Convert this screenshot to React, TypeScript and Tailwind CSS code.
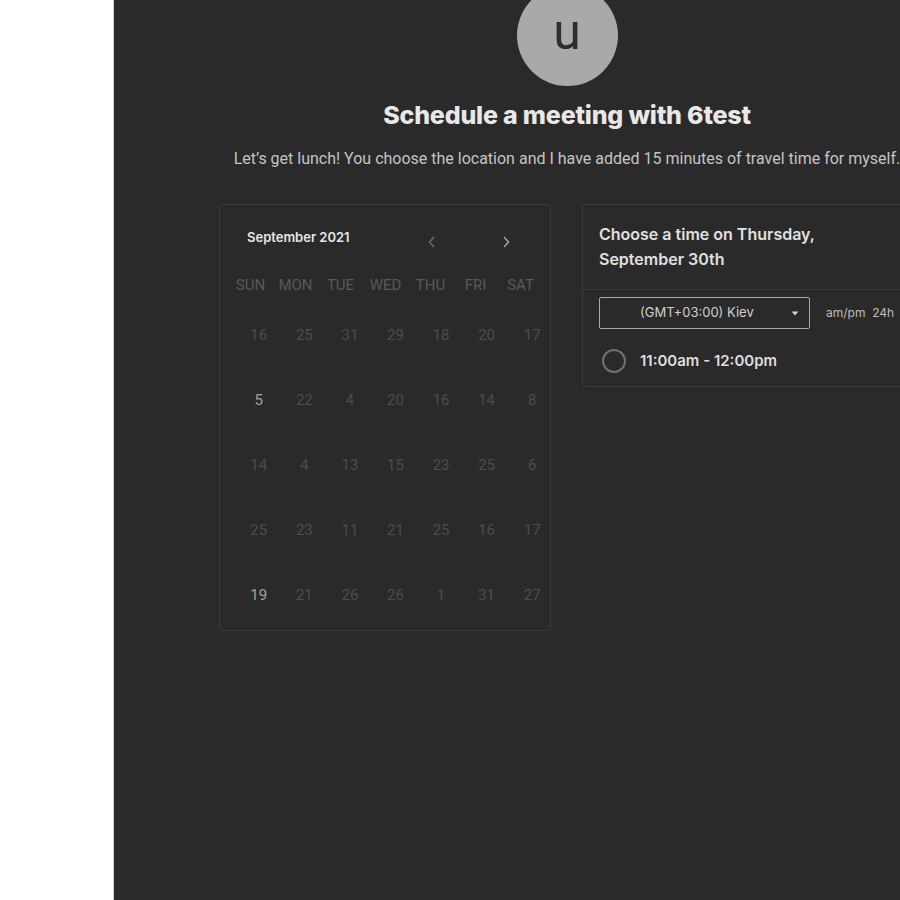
import React from "react";

const weekdays = ["SUN", "MON", "TUE", "WED", "THU", "FRI", "SAT"];
const rows = [
  ["16", "25", "31", "29", "18", "20", "17"],
  ["5", "22", "4", "20", "16", "14", "8"],
  ["14", "4", "13", "15", "23", "25", "6"],
  ["25", "23", "11", "21", "25", "16", "17"],
  ["19", "21", "26", "26", "1", "31", "27"],
];

export default function App() {
  return (
    <div className="flex h-[900px] w-[900px] overflow-hidden bg-white" style={{ fontFamily: "Inter, 'Noto Sans', sans-serif" }}>
      <div className="w-[113px] shrink-0 bg-white" />
      <div className="flex-1 overflow-hidden bg-[#2a2a2a] border-l border-[#cfcfcf]">
        <div className="w-[906px] shrink-0 flex flex-col items-center">
          <div className="-mt-[15px] flex h-[101px] w-[101px] items-center justify-center rounded-full bg-[#a9a9a9]">
            <span className="text-[50px] leading-none text-[#2e2e2e] -mt-[8px]" style={{ fontFamily: "Roboto, sans-serif" }}>u</span>
          </div>
          <h1 className="mt-[14px] text-[25px] font-extrabold leading-[30px] text-[#e8e8e8] tracking-[-0.2px]">Schedule a meeting with 6test</h1>
          <p className="mt-[19px] text-[16px] leading-[20px] text-[#c4c4c4] whitespace-nowrap" style={{ fontFamily: "Roboto, sans-serif" }}>
            Let’s get lunch! You choose the location and I have added 15 minutes of travel time for myself.
          </p>
          <div className="mt-[35px] flex gap-[31px] self-start pl-[105px]">
            <div className="w-[332px] h-[427px] shrink-0 rounded-[3px] border border-[#3b3b3b]">
              <div className="flex h-[69px] items-center pl-[27px] pt-[2px]">
                <span className="w-[160px] text-[13px] font-semibold text-[#e6e6e6] -mt-[5px]">September 2021</span>
                <svg width="10" height="14" viewBox="0 0 10 14" className="ml-[20px] mt-[3px]" fill="none" stroke="#6b6b6b" strokeWidth="1.6">
                  <path d="M7 2 L2.5 7 L7 12" />
                </svg>
                <svg width="10" height="14" viewBox="0 0 10 14" className="ml-[64px] mt-[3px]" fill="none" stroke="#a0a0a0" strokeWidth="1.6">
                  <path d="M3 2 L7.5 7 L3 12" />
                </svg>
              </div>
              <div className="grid grid-cols-7 w-[315px] ml-[8px] h-[16px] items-center" style={{ fontFamily: "Roboto, sans-serif" }}>
                {weekdays.map((d) => (
                  <div key={d} className="text-center text-[15px] text-[#595959]">{d}</div>
                ))}
              </div>
              <div className="ml-[16px] w-[319px] mt-[13px]" style={{ fontFamily: "Roboto, sans-serif" }}>
                {rows.map((r, i) => (
                  <div key={i} className="grid grid-cols-7 h-[65px] items-center">
                    {r.map((n, j) => {
                      const bright = j === 0 && (i === 1 || i === 4);
                      return (
                        <div key={j} className={"text-center text-[15px] " + (bright ? "text-[#a3a3a3]" : "text-[#4d4d4d]")}>
                          {n}
                        </div>
                      );
                    })}
                  </div>
                ))}
              </div>
            </div>
            <div className="w-[340px] h-[183px] shrink-0 rounded-[3px] border border-[#3b3b3b]">
              <div className="border-b border-[#3b3b3b] px-[16px] pt-[17px] pb-[17px] h-[85px]">
                <div className="text-[16px] font-semibold leading-[25px] text-[#e0e0e0]">
                  Choose a time on Thursday,
                  <br />
                  September 30th
                </div>
              </div>
              <div className="flex items-center px-[16px] pt-[7px]">
                <div className="flex h-[32px] w-[211px] items-center rounded-[2px] border border-[#a8a8a8] pl-[40px] pr-[10px]">
                  <span className="flex-1 text-[13px] text-[#cfcfcf]">(GMT+03:00) Kiev</span>
                  <svg width="8" height="5" viewBox="0 0 8 5"><path d="M0.5 0.5 L7.5 0.5 L4 4.5 Z" fill="#d0d0d0" /></svg>
                </div>
                <span className="ml-[16px] text-[12px] text-[#bdbdbd] whitespace-nowrap">am/pm&nbsp;&nbsp;24h</span>
              </div>
              <div className="flex items-center pl-[19px] pt-[20px]">
                <div className="h-[24px] w-[24px] rounded-full border-[2px] border-[#707070]" />
                <span className="ml-[14px] text-[15px] font-semibold text-[#dedede]">11:00am - 12:00pm</span>
              </div>
            </div>
          </div>
        </div>
      </div>
    </div>
  );
}
